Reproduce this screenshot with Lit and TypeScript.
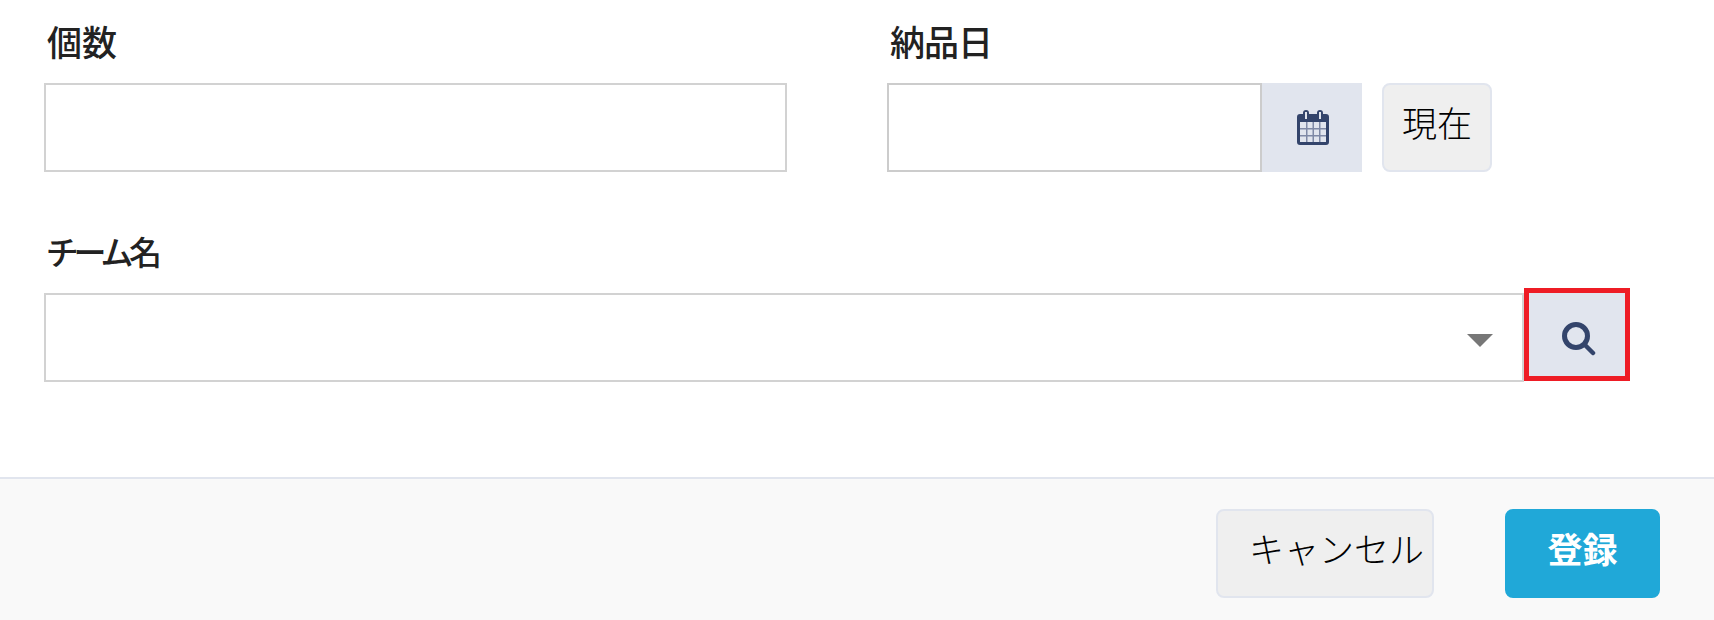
import { LitElement, html, css } from 'lit';
import { customElement } from 'lit/decorators.js';

@customElement('app-root')
export class AppRoot extends LitElement {
	static styles = css`
		* {
			box-sizing: border-box;
		}

		:host {
			display: block;
			background: #fff;
			color: #222;
			font-family: "Noto Sans CJK JP", "Noto Sans", sans-serif;
			height: 620px;
			overflow: hidden;
		}

		.form {
			display: flex;
			flex-direction: column;
			gap: 53px;
			height: 477px;
			padding: 15px 0 0 44px;
		}

		.row {
			display: flex;
		}

		.field {
			display: flex;
			flex-direction: column;
			gap: 16px;
		}

		.count {
			margin-right: 100px;
			width: 743px;
		}

		.label {
			font-feature-settings: "palt";
			font-size: 35px;
			font-weight: 500;
			height: 52px;
			line-height: 52px;
			margin-left: 3px;
		}

		.label.tight {
			letter-spacing: -1px;
		}

		.label.kana {
			font-size: 33px;
			letter-spacing: -3.5px;
		}

		.input {
			background: #fff;
			border: 2px solid #d2d2d2;
			height: 89px;
		}

		.group {
			align-items: flex-start;
			display: flex;
		}

		.date {
			border-color: #cccccc;
			width: 375px;
		}

		.addon {
			align-items: center;
			background: #e1e5ee;
			display: flex;
			height: 89px;
			justify-content: center;
			padding-left: 2px;
			width: 100px;
		}

		.btn {
			align-items: center;
			background: #efefef;
			border: 2px solid #e1e5ee;
			border-radius: 8px;
			color: #000;
			display: flex;
			font-size: 35px;
			font-weight: 300;
			height: 89px;
			justify-content: center;
			padding-bottom: 12px;
		}

		.now {
			margin-left: 20px;
			width: 110px;
		}

		.select {
			position: relative;
			width: 1480px;
		}

		.caret {
			border-left: 13px solid transparent;
			border-right: 13px solid transparent;
			border-top: 13px solid #777;
			height: 0;
			position: absolute;
			right: 29px;
			top: 39px;
			width: 0;
		}

		.search {
			align-items: center;
			background: #e1e5ee;
			border: 5px solid #ee1c25;
			display: flex;
			height: 93px;
			justify-content: center;
			margin-top: -5px;
			padding-left: 3px;
			padding-top: 8px;
			width: 106px;
		}

		.footer {
			background: #f9f9f9;
			border-top: 2px solid #e1e5ee;
			display: flex;
			gap: 71px;
			height: 143px;
			justify-content: flex-end;
			padding: 30px 54px 0 0;
		}

		.cancel {
			padding-left: 23px;
			width: 218px;
		}

		.submit {
			background: #20a8d8;
			border-color: #20a8d8;
			color: #fff;
			font-weight: 700;
			width: 155px;
		}
	`;

	render() {
		return html`
			<div class="form">
				<div class="row">
					<div class="field count">
						<div class="label">個数</div>
						<div class="input"></div>
					</div>
					<div class="field">
						<div class="label tight">納品日</div>
						<div class="group">
							<div class="input date"></div>
							<div class="addon">
								<svg width="32" height="35" viewBox="0 0 32 35">
									<path fill="#33446b" d="M3 4h3V3a3 3 0 0 1 6 0v1h8V3a3 3 0 0 1 6 0v1h3a3 3 0 0 1 3 3v25a3 3 0 0 1-3 3H3a3 3 0 0 1-3-3V7a3 3 0 0 1 3-3z"/>
									<path fill="#e1e5ee" d="M8 2h2v7H8zM22 2h2v7h-2z"/>
									<path fill="#e1e5ee" d="M3 12h26v20H3z"/>
									<path fill="#7f89a6" d="M9 12h1.5v20H9zM15.5 12H17v20h-1.5zM22 12h1.5v20H22zM3 18h26v1.5H3zM3 25h26v1.5H3z"/>
								</svg>
							</div>
							<div class="btn now">現在</div>
						</div>
					</div>
				</div>
				<div class="field">
					<div class="label kana">チーム名</div>
					<div class="group">
						<div class="input select"><span class="caret"></span></div>
						<div class="search">
							<svg width="34" height="34" viewBox="0 0 34 34">
								<circle cx="14" cy="14" r="11.5" fill="none" stroke="#33446b" stroke-width="5"/>
								<path d="M23 23l8 8" stroke="#33446b" stroke-width="4.5" stroke-linecap="round"/>
							</svg>
						</div>
					</div>
				</div>
			</div>
			<div class="footer">
				<div class="btn cancel">キャンセル</div>
				<div class="btn submit">登録</div>
			</div>
		`;
	}
}
